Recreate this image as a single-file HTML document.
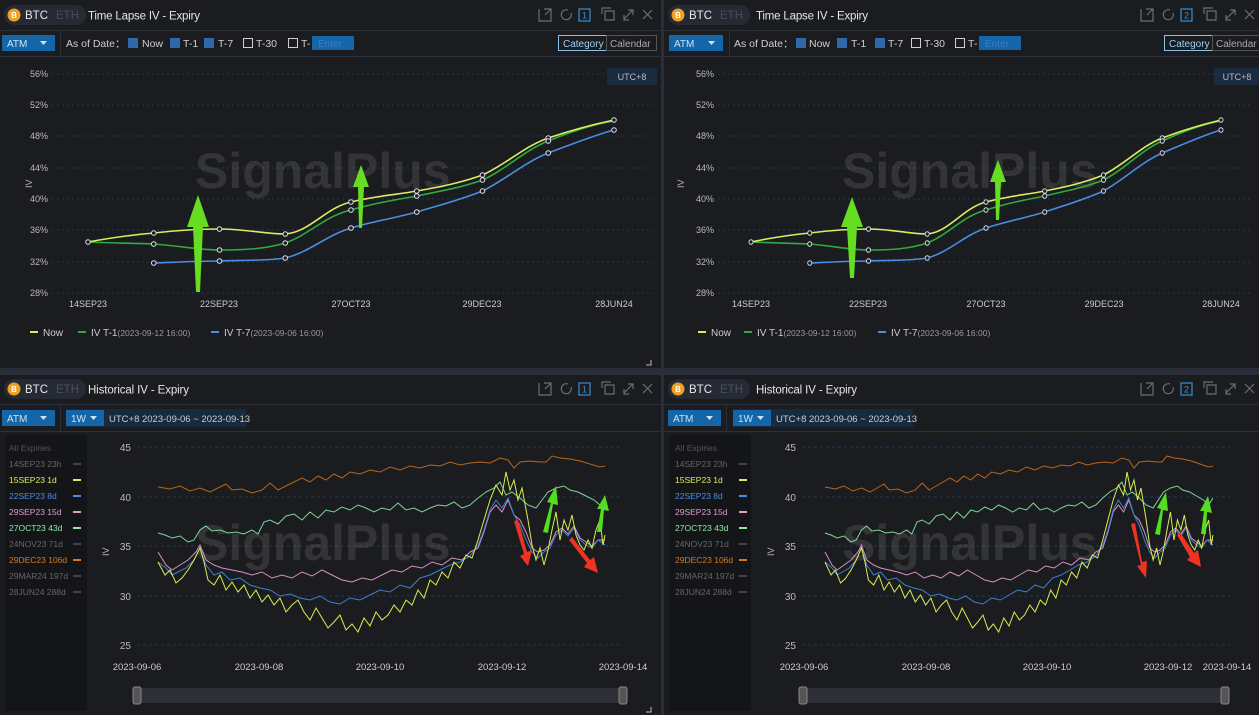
<!DOCTYPE html>
<html><head><meta charset="utf-8">
<style>
*{margin:0;padding:0}
body{width:1259px;height:715px;background:#2a2e38;overflow:hidden}
svg{display:block}
text{font-family:"Liberation Sans",sans-serif}
</style></head><body>
<svg width="1259" height="715" xmlns="http://www.w3.org/2000/svg">
<defs>
<polyline id="sy" fill="none" stroke="#d8ee50" stroke-width="1" vector-effect="non-scaling-stroke" points="158,562 165,575 170,570 176,583 182,578 188,570 194,560 200,548 204,562 208,580 214,585 220,575 226,590 232,582 238,592 244,585 250,598 256,590 262,602 268,595 274,605 280,598 286,612 292,605 298,600 304,612 310,620 316,608 322,618 328,628 334,622 340,615 346,630 352,624 358,632 364,618 370,626 376,612 382,620 388,615 394,605 400,612 406,600 412,605 418,590 424,598 430,580 436,585 442,572 448,578 454,562 460,568 466,555 472,558 478,540 484,520 490,500 496,485 502,495 506,472 510,490 514,480 518,500 522,488 528,520 532,545 536,560 540,548 544,565 548,550 552,530 556,512 560,540 564,520 568,530 572,515 576,535 580,545 584,550 588,540 592,548 596,530 600,520 603,545 605,535"/>
<polyline id="sb" fill="none" stroke="#3f7fd0" stroke-width="1" vector-effect="non-scaling-stroke" points="158,562 166,568 172,575 178,572 186,568 194,560 200,548 206,565 214,575 222,572 230,580 240,578 250,585 260,588 270,590 280,596 290,594 300,598 310,600 320,596 330,602 340,604 350,598 360,600 370,595 380,590 390,592 400,585 410,588 420,578 430,575 440,570 450,565 460,562 470,556 478,545 484,530 490,510 496,500 502,508 508,498 514,515 520,525 526,540 532,552 538,558 544,552 550,548 556,535 562,530 568,536 574,528 580,540 586,545 592,548 598,540 605,545"/>
<polyline id="sp" fill="none" stroke="#d990c4" stroke-width="1" vector-effect="non-scaling-stroke" points="158,552 166,565 172,570 180,565 188,560 196,552 200,545 206,560 214,565 222,568 232,570 242,572 252,575 262,572 272,578 282,575 292,578 302,572 312,576 322,570 332,575 342,580 352,582 362,578 372,580 382,575 392,570 402,572 412,566 422,568 432,562 442,565 452,558 462,560 470,552 478,548 484,532 490,512 496,505 502,512 508,500 514,515 520,520 526,532 532,548 538,552 544,550 550,545 556,532 562,528 568,534 574,526 580,538 586,542 592,546 598,540 605,540"/>
<polyline id="sg" fill="none" stroke="#7fd49a" stroke-width="1" vector-effect="non-scaling-stroke" points="158,533 165,535 172,538 180,536 188,542 194,540 200,530 206,526 212,531 220,530 228,533 236,532 244,534 252,530 258,534 264,522 270,520 278,524 286,516 294,514 302,520 310,512 318,518 326,510 334,512 342,507 350,510 358,505 366,508 374,512 382,508 390,510 398,503 406,510 414,508 422,512 430,508 438,505 446,506 454,502 462,508 470,505 478,498 486,492 494,488 500,482 506,495 512,492 520,498 528,505 536,508 542,500 548,492 556,488 564,486 570,490 578,492 586,496 594,500 600,505 605,498"/>
<polyline id="so" fill="none" stroke="#b8651a" stroke-width="1" vector-effect="non-scaling-stroke" points="158,487 170,489 180,486 190,491 200,488 210,492 220,487 226,484 232,490 242,489 252,493 262,490 270,483 278,490 286,486 294,482 302,478 310,482 318,476 326,480 334,474 342,478 350,472 360,474 370,470 380,472 390,467 400,470 410,466 420,468 430,465 440,466 450,462 460,465 470,463 480,462 490,463 500,458 508,460 514,468 520,462 530,461 540,462 546,462 552,456 560,458 570,459 580,461 590,464 600,467 605,466"/>
<g id="topdata" fill="none" stroke-width="1.6" stroke-linejoin="round">
<path vector-effect="non-scaling-stroke" stroke="#4a8ee0" d="M153.75,263 C180,262 200,261 219.5,261 C245,260 265,261 285.25,258 C310,252 325,236 351,228 C375,221 395,218 416.75,212 C440,205 460,200 482.5,191 C505,180 525,162 548.25,153 C575,143 595,135 614,130"/>
<path vector-effect="non-scaling-stroke" stroke="#2faa40" d="M88,242 C110,243 130,243 153.75,244 C180,246 200,250 219.5,250 C245,250 265,249 285.25,243 C310,234 325,216 351,210 C375,203 395,200 416.75,196 C440,191 460,188 482.5,180 C505,170 525,150 548.25,141 C575,130 595,124 614,121"/>
<path vector-effect="non-scaling-stroke" stroke="#d8ee60" d="M88,242 C110,238 130,235 153.75,233 C180,230 200,229 219.5,229 C245,229 265,234 285.25,234 C310,232 325,208 351,202 C375,196 395,195 416.75,191 C440,187 460,183 482.5,175 C505,165 525,146 548.25,138 C575,129 595,124 614,120"/>
<g fill="#1b1c1f" stroke="#dde" stroke-width="1">
<circle cx="88" cy="242" r="2.3"/><circle cx="153.75" cy="233" r="2.3"/><circle cx="219.5" cy="229" r="2.3"/><circle cx="285.25" cy="234" r="2.3"/><circle cx="351" cy="202" r="2.3"/><circle cx="416.75" cy="191" r="2.3"/><circle cx="482.5" cy="175" r="2.3"/><circle cx="548.25" cy="138" r="2.3"/><circle cx="614" cy="120" r="2.3"/>
<circle cx="153.75" cy="244" r="2.3"/><circle cx="219.5" cy="250" r="2.3"/><circle cx="285.25" cy="243" r="2.3"/><circle cx="351" cy="210" r="2.3"/><circle cx="416.75" cy="196" r="2.3"/><circle cx="482.5" cy="180" r="2.3"/><circle cx="548.25" cy="141" r="2.3"/>
<circle cx="153.75" cy="263" r="2.3"/><circle cx="219.5" cy="261" r="2.3"/><circle cx="285.25" cy="258" r="2.3"/><circle cx="351" cy="228" r="2.3"/><circle cx="416.75" cy="212" r="2.3"/><circle cx="482.5" cy="191" r="2.3"/><circle cx="548.25" cy="153" r="2.3"/><circle cx="614" cy="130" r="2.3"/>
</g></g>
</defs>

<!-- ============ TOP LEFT ============ -->
<svg x="0" y="0" width="661" height="368">
<rect width="661" height="368" fill="#1b1c1f"/>
<rect x="4" y="5" width="82" height="20" rx="10" fill="#262a35"/><circle cx="14" cy="15" r="6.5" fill="#f0a020"/><text x="14" y="18" font-size="8" fill="#fff" text-anchor="middle" font-weight="bold">B</text>
<text x="25" y="19" font-size="11.5" fill="#e8e8e8">BTC</text><text x="56" y="19" font-size="11.5" fill="#4a4e58">ETH</text>
<text x="88" y="19.5" font-size="11.5" fill="#e6e6e6" textLength="112">Time Lapse IV - Expiry</text>
<g stroke="#6a6e78" fill="none" stroke-width="1.2"><path d="M539 9v12h12v-5M544 9h7v7M551 9l-6 6"/><path d="M568 10a5 5 0 1 0 3 3"/><rect x="579" y="9" width="11" height="12" stroke="#3a8fd0"/><path d="M605 11h9v9h-9z M602 14v-6h9"/><path d="M624 19l9-9M628 10h5v5M624 15v5h5"/><path d="M643 10l9 9M652 10l-9 9"/></g>
<text x="584.5" y="18.5" font-size="9" fill="#3a8fd0" text-anchor="middle">1</text>
<line x1="0" y1="30.5" x2="661" y2="30.5" stroke="#2c3038"/>
<rect x="2" y="35" width="53" height="16" fill="#1466a8"/><text x="7" y="47" font-size="10" fill="#cfe3f5">ATM</text><path d="M40 41h7l-3.5 4z" fill="#cfe3f5"/>
<line x1="60.5" y1="31" x2="60.5" y2="56" stroke="#2c3038"/>
<text x="66" y="47" font-size="10.5" fill="#cfcfcf">As of Date：</text>
<rect x="128" y="38" width="10" height="10" fill="#2e6aa8"/><text x="142" y="47" font-size="10.5" fill="#cfcfcf">Now</text>
<rect x="170" y="38" width="10" height="10" fill="#2e6aa8"/><text x="183" y="47" font-size="10.5" fill="#cfcfcf">T-1</text>
<rect x="204" y="38" width="10" height="10" fill="#2e6aa8"/><text x="218" y="47" font-size="10.5" fill="#cfcfcf">T-7</text>
<rect x="243.5" y="38.5" width="9" height="9" fill="none" stroke="#cfcfcf"/><text x="256" y="47" font-size="10.5" fill="#cfcfcf">T-30</text>
<rect x="288.5" y="38.5" width="9" height="9" fill="none" stroke="#cfcfcf"/><text x="301" y="47" font-size="10.5" fill="#cfcfcf">T-</text>
<rect x="312" y="36" width="42" height="14" fill="#1466a8"/><text x="318" y="47" font-size="10" fill="#3a7fc0">Enter</text>
<rect x="558.5" y="35.5" width="48" height="15" fill="none" stroke="#8fc0e8"/><text x="563" y="47" font-size="10" fill="#9cd0f5">Category</text><rect x="606.5" y="35.5" width="50" height="15" fill="none" stroke="#555"/><text x="610" y="47" font-size="10" fill="#aaa">Calendar</text>
<line x1="0" y1="56.5" x2="661" y2="56.5" stroke="#2c3038"/>
<g font-size="9" fill="#bbb" text-anchor="end"><text x="48" y="77">56%</text><text x="48" y="108">52%</text><text x="48" y="139">48%</text><text x="48" y="171">44%</text><text x="48" y="202">40%</text><text x="48" y="233">36%</text><text x="48" y="265">32%</text><text x="48" y="296">28%</text></g>
<g stroke="#1d3a58" stroke-dasharray="2 3"><line x1="52" y1="74" x2="653" y2="74"/><line x1="52" y1="105" x2="653" y2="105"/><line x1="52" y1="136" x2="653" y2="136"/><line x1="52" y1="168" x2="653" y2="168"/><line x1="52" y1="199" x2="653" y2="199"/><line x1="52" y1="230" x2="653" y2="230"/><line x1="52" y1="262" x2="653" y2="262"/><line x1="52" y1="293" x2="653" y2="293"/></g>
<rect x="607" y="68" width="50" height="17" fill="#1a2a40"/><text x="632" y="80" font-size="9" fill="#bbb" text-anchor="middle">UTC+8</text>
<text x="32" y="188" font-size="9" fill="#bbb" transform="rotate(-90 32 188)">IV</text>
<g font-size="9" fill="#ccc" text-anchor="middle"><text x="88" y="307">14SEP23</text><text x="219" y="307">22SEP23</text><text x="351" y="307">27OCT23</text><text x="482" y="307">29DEC23</text><text x="614" y="307">28JUN24</text></g>
<text x="195" y="188" font-size="50" font-weight="bold" fill="#fff" fill-opacity="0.11">SignalPlus</text>
<use href="#topdata"/>
<polygon fill="#66dd22" points="196,292 200,292 203,227 209,227 198,195 187,227 193,227"/>
<polygon fill="#66dd22" points="359,228 362,228 364,187 369,187 361,165 353,187 358,187"/>
<line x1="30" y1="332" x2="38" y2="332" stroke="#d8ee60" stroke-width="2"/><text x="43" y="336" font-size="10" fill="#ccc">Now</text>
<line x1="78" y1="332" x2="86" y2="332" stroke="#2faa40" stroke-width="2"/><text x="91" y="336" font-size="10" fill="#ccc">IV T-1<tspan font-size="8.5" fill="#999">(2023-09-12 16:00)</tspan></text>
<line x1="211" y1="332" x2="219" y2="332" stroke="#4a8ee0" stroke-width="2"/><text x="224" y="336" font-size="10" fill="#ccc">IV T-7<tspan font-size="8.5" fill="#999">(2023-09-06 16:00)</tspan></text>
<path d="M651 360v5h-5" stroke="#bbb" fill="none"/>
</svg>

<!-- ============ TOP RIGHT ============ -->
<svg x="664" y="0" width="595" height="368">
<rect width="595" height="368" fill="#1b1c1f"/>
<rect x="4" y="5" width="82" height="20" rx="10" fill="#262a35"/><circle cx="14" cy="15" r="6.5" fill="#f0a020"/><text x="14" y="18" font-size="8" fill="#fff" text-anchor="middle" font-weight="bold">B</text>
<text x="25" y="19" font-size="11.5" fill="#e8e8e8">BTC</text><text x="56" y="19" font-size="11.5" fill="#4a4e58">ETH</text>
<text x="92" y="19.5" font-size="11.5" fill="#e6e6e6" textLength="112">Time Lapse IV - Expiry</text>
<g stroke="#6a6e78" fill="none" stroke-width="1.2"><path d="M477 9v12h12v-5M482 9h7v7M489 9l-6 6"/><path d="M506 10a5 5 0 1 0 3 3"/><rect x="517" y="9" width="11" height="12" stroke="#3a8fd0"/><path d="M543 11h9v9h-9z M540 14v-6h9"/><path d="M562 19l9-9M566 10h5v5M562 15v5h5"/><path d="M581 10l9 9M590 10l-9 9"/></g>
<text x="522.5" y="18.5" font-size="9" fill="#3a8fd0" text-anchor="middle">2</text>
<line x1="0" y1="30.5" x2="595" y2="30.5" stroke="#2c3038"/>
<rect x="5" y="35" width="54" height="16" fill="#1466a8"/><text x="10" y="47" font-size="10" fill="#cfe3f5">ATM</text><path d="M44 41h7l-3.5 4z" fill="#cfe3f5"/>
<line x1="65.5" y1="31" x2="65.5" y2="56" stroke="#2c3038"/>
<text x="70" y="47" font-size="10.5" fill="#cfcfcf">As of Date：</text>
<rect x="132" y="38" width="10" height="10" fill="#2e6aa8"/><text x="145" y="47" font-size="10.5" fill="#cfcfcf">Now</text>
<rect x="173" y="38" width="10" height="10" fill="#2e6aa8"/><text x="187" y="47" font-size="10.5" fill="#cfcfcf">T-1</text>
<rect x="211" y="38" width="10" height="10" fill="#2e6aa8"/><text x="224" y="47" font-size="10.5" fill="#cfcfcf">T-7</text>
<rect x="247.5" y="38.5" width="9" height="9" fill="none" stroke="#cfcfcf"/><text x="260" y="47" font-size="10.5" fill="#cfcfcf">T-30</text>
<rect x="291.5" y="38.5" width="9" height="9" fill="none" stroke="#cfcfcf"/><text x="304" y="47" font-size="10.5" fill="#cfcfcf">T-</text>
<rect x="315" y="36" width="42" height="14" fill="#1466a8"/><text x="321" y="47" font-size="10" fill="#3a7fc0">Enter</text>
<rect x="500.5" y="35.5" width="48" height="15" fill="none" stroke="#8fc0e8"/><text x="505" y="47" font-size="10" fill="#9cd0f5">Category</text><rect x="548.5" y="35.5" width="50" height="15" fill="none" stroke="#555"/><text x="552" y="47" font-size="10" fill="#aaa">Calendar</text>
<line x1="0" y1="56.5" x2="595" y2="56.5" stroke="#2c3038"/>
<g font-size="9" fill="#bbb" text-anchor="end"><text x="50" y="77">56%</text><text x="50" y="108">52%</text><text x="50" y="139">48%</text><text x="50" y="171">44%</text><text x="50" y="202">40%</text><text x="50" y="233">36%</text><text x="50" y="265">32%</text><text x="50" y="296">28%</text></g>
<g stroke="#1d3a58" stroke-dasharray="2 3"><line x1="54" y1="74" x2="589" y2="74"/><line x1="54" y1="105" x2="589" y2="105"/><line x1="54" y1="136" x2="589" y2="136"/><line x1="54" y1="168" x2="589" y2="168"/><line x1="54" y1="199" x2="589" y2="199"/><line x1="54" y1="230" x2="589" y2="230"/><line x1="54" y1="262" x2="589" y2="262"/><line x1="54" y1="293" x2="589" y2="293"/></g>
<rect x="550" y="68" width="45" height="17" fill="#1a2a40"/><text x="573" y="80" font-size="9" fill="#bbb" text-anchor="middle">UTC+8</text>
<text x="20" y="188" font-size="9" fill="#bbb" transform="rotate(-90 20 188)">IV</text>
<g font-size="9" fill="#ccc" text-anchor="middle"><text x="87" y="307">14SEP23</text><text x="204" y="307">22SEP23</text><text x="322" y="307">27OCT23</text><text x="440" y="307">29DEC23</text><text x="557" y="307">28JUN24</text></g>
<text x="178" y="188" font-size="50" font-weight="bold" fill="#fff" fill-opacity="0.11">SignalPlus</text>
<use href="#topdata" transform="translate(87,0) scale(0.8935,1) translate(-88,0)"/>
<polygon fill="#66dd22" points="186,278 190,278 193,227 199,227 188,197 177,227 183,227"/>
<polygon fill="#66dd22" points="332,220 335,220 337,182 342,182 334,160 326,182 331,182"/>
<line x1="34" y1="332" x2="42" y2="332" stroke="#d8ee60" stroke-width="2"/><text x="47" y="336" font-size="10" fill="#ccc">Now</text>
<line x1="80" y1="332" x2="88" y2="332" stroke="#2faa40" stroke-width="2"/><text x="93" y="336" font-size="10" fill="#ccc">IV T-1<tspan font-size="8.5" fill="#999">(2023-09-12 16:00)</tspan></text>
<line x1="214" y1="332" x2="222" y2="332" stroke="#4a8ee0" stroke-width="2"/><text x="227" y="336" font-size="10" fill="#ccc">IV T-7<tspan font-size="8.5" fill="#999">(2023-09-06 16:00)</tspan></text>
</svg>

<!-- ============ BOTTOM LEFT ============ -->
<svg x="0" y="375" width="661" height="340" viewBox="0 375 661 340">
<rect x="0" y="375" width="661" height="340" fill="#1b1c1f"/>
<rect x="4" y="379" width="82" height="20" rx="10" fill="#262a35"/><circle cx="14" cy="389" r="6.5" fill="#f0a020"/><text x="14" y="392" font-size="8" fill="#fff" text-anchor="middle" font-weight="bold">B</text>
<text x="25" y="393" font-size="11.5" fill="#e8e8e8">BTC</text><text x="56" y="393" font-size="11.5" fill="#4a4e58">ETH</text>
<text x="88" y="393.5" font-size="11.5" fill="#e6e6e6" textLength="101">Historical IV - Expiry</text>
<g stroke="#6a6e78" fill="none" stroke-width="1.2"><path d="M539 383v12h12v-5M544 383h7v7M551 383l-6 6"/><path d="M568 384a5 5 0 1 0 3 3"/><rect x="579" y="383" width="11" height="12" stroke="#3a8fd0"/><path d="M605 385h9v9h-9z M602 388v-6h9"/><path d="M624 393l9-9M628 384h5v5M624 389v5h5"/><path d="M643 384l9 9M652 384l-9 9"/></g>
<text x="584.5" y="392.5" font-size="9" fill="#3a8fd0" text-anchor="middle">1</text>
<line x1="0" y1="404.5" x2="661" y2="404.5" stroke="#2c3038"/>
<rect x="2" y="410" width="53" height="16" fill="#1466a8"/><text x="7" y="422" font-size="10" fill="#cfe3f5">ATM</text><path d="M40 416h7l-3.5 4z" fill="#cfe3f5"/>
<line x1="60.5" y1="405" x2="60.5" y2="432" stroke="#2c3038"/>
<rect x="66" y="409" width="180" height="18" fill="#182a40"/>
<rect x="66" y="410" width="38" height="16" fill="#1466a8"/><text x="71" y="422" font-size="10" fill="#cfe3f5">1W</text><path d="M90 416h7l-3.5 4z" fill="#cfe3f5"/>
<text x="109" y="422" font-size="9.5" fill="#ccc">UTC+8 2023-09-06 ~ 2023-09-13</text>
<line x1="0" y1="431.5" x2="661" y2="431.5" stroke="#2c3038"/>
<rect x="5" y="435" width="82" height="276" fill="#141518"/>
<g font-size="8.5"><text x="9" y="451" fill="#555">All Expiries</text><text x="9" y="467" fill="#666">14SEP23 23h</text><text x="9" y="483" fill="#d8ee60">15SEP23 1d</text><text x="9" y="499" fill="#4a8ee0">22SEP23 8d</text><text x="9" y="515" fill="#e59ad0">29SEP23 15d</text><text x="9" y="531" fill="#8fe8a8">27OCT23 43d</text><text x="9" y="547" fill="#666">24NOV23 71d</text><text x="9" y="563" fill="#d57a20">29DEC23 106d</text><text x="9" y="579" fill="#666">29MAR24 197d</text><text x="9" y="595" fill="#666">28JUN24 288d</text></g>
<g stroke-width="2"><line x1="73" y1="464" x2="81" y2="464" stroke="#444"/><line x1="73" y1="480" x2="81" y2="480" stroke="#d8ee60"/><line x1="73" y1="496" x2="81" y2="496" stroke="#4a8ee0"/><line x1="73" y1="512" x2="81" y2="512" stroke="#e59ad0"/><line x1="73" y1="528" x2="81" y2="528" stroke="#8fe8a8"/><line x1="73" y1="544" x2="81" y2="544" stroke="#444"/><line x1="73" y1="560" x2="81" y2="560" stroke="#d57a20"/><line x1="73" y1="576" x2="81" y2="576" stroke="#444"/><line x1="73" y1="592" x2="81" y2="592" stroke="#444"/></g>
<g font-size="10" fill="#bbb" text-anchor="end"><text x="131" y="451">45</text><text x="131" y="501">40</text><text x="131" y="550">35</text><text x="131" y="600">30</text><text x="131" y="649">25</text></g>
<g stroke="#1d3a58" stroke-dasharray="3 3"><line x1="137" y1="447" x2="622" y2="447"/><line x1="137" y1="497" x2="622" y2="497"/><line x1="137" y1="546" x2="622" y2="546"/><line x1="137" y1="596" x2="622" y2="596"/><line x1="137" y1="645" x2="622" y2="645"/></g>
<text x="109" y="556" font-size="9" fill="#bbb" transform="rotate(-90 109 556)">IV</text>
<g font-size="9.5" fill="#ccc" text-anchor="middle"><text x="137" y="670">2023-09-06</text><text x="259" y="670">2023-09-08</text><text x="380" y="670">2023-09-10</text><text x="502" y="670">2023-09-12</text><text x="623" y="670">2023-09-14</text></g>
<text x="195" y="560" font-size="50" font-weight="bold" fill="#fff" fill-opacity="0.11">SignalPlus</text>
<use href="#so"/><use href="#sg"/><use href="#sp"/><use href="#sb"/><use href="#sy"/>
<polygon fill="#ee3322" points="514,521 518,520 527,552 532,550 528,566 520,556 524,554"/>
<polygon fill="#ee3322" points="569,540 572,537 590,560 594,557 598,573 584,567 587,563"/>
<polygon fill="#55dd22" points="543,532 548,533 553,504 558,505 556,486 547,502 551,503"/>
<polygon fill="#55dd22" points="597,532 602,532 604,510 609,511 605,495 597,509 601,509"/>
<rect x="135" y="688" width="492" height="15" rx="3" fill="#2e3036"/><rect x="133" y="687" width="8" height="17" rx="2" fill="#555" stroke="#888"/><rect x="619" y="687" width="8" height="17" rx="2" fill="#555" stroke="#888"/>
<path d="M651 707v5h-5" stroke="#bbb" fill="none"/>
</svg>

<!-- ============ BOTTOM RIGHT ============ -->
<svg x="664" y="375" width="595" height="340" viewBox="0 375 595 340">
<rect x="0" y="375" width="595" height="340" fill="#1b1c1f"/>
<rect x="4" y="379" width="82" height="20" rx="10" fill="#262a35"/><circle cx="14" cy="389" r="6.5" fill="#f0a020"/><text x="14" y="392" font-size="8" fill="#fff" text-anchor="middle" font-weight="bold">B</text>
<text x="25" y="393" font-size="11.5" fill="#e8e8e8">BTC</text><text x="56" y="393" font-size="11.5" fill="#4a4e58">ETH</text>
<text x="92" y="393.5" font-size="11.5" fill="#e6e6e6" textLength="101">Historical IV - Expiry</text>
<g stroke="#6a6e78" fill="none" stroke-width="1.2"><path d="M477 383v12h12v-5M482 383h7v7M489 383l-6 6"/><path d="M506 384a5 5 0 1 0 3 3"/><rect x="517" y="383" width="11" height="12" stroke="#3a8fd0"/><path d="M543 385h9v9h-9z M540 388v-6h9"/><path d="M562 393l9-9M566 384h5v5M562 389v5h5"/><path d="M581 384l9 9M590 384l-9 9"/></g>
<text x="522.5" y="392.5" font-size="9" fill="#3a8fd0" text-anchor="middle">2</text>
<line x1="0" y1="404.5" x2="595" y2="404.5" stroke="#2c3038"/>
<rect x="4" y="410" width="53" height="16" fill="#1466a8"/><text x="9" y="422" font-size="10" fill="#cfe3f5">ATM</text><path d="M42 416h7l-3.5 4z" fill="#cfe3f5"/>
<line x1="62.5" y1="405" x2="62.5" y2="432" stroke="#2c3038"/>
<rect x="69" y="409" width="180" height="18" fill="#182a40"/>
<rect x="69" y="410" width="38" height="16" fill="#1466a8"/><text x="74" y="422" font-size="10" fill="#cfe3f5">1W</text><path d="M93 416h7l-3.5 4z" fill="#cfe3f5"/>
<text x="112" y="422" font-size="9.5" fill="#ccc">UTC+8 2023-09-06 ~ 2023-09-13</text>
<line x1="0" y1="431.5" x2="595" y2="431.5" stroke="#2c3038"/>
<rect x="5" y="435" width="82" height="276" fill="#141518"/>
<g font-size="8.5"><text x="11" y="451" fill="#555">All Expiries</text><text x="11" y="467" fill="#666">14SEP23 23h</text><text x="11" y="483" fill="#d8ee60">15SEP23 1d</text><text x="11" y="499" fill="#4a8ee0">22SEP23 8d</text><text x="11" y="515" fill="#e59ad0">29SEP23 15d</text><text x="11" y="531" fill="#8fe8a8">27OCT23 43d</text><text x="11" y="547" fill="#666">24NOV23 71d</text><text x="11" y="563" fill="#d57a20">29DEC23 106d</text><text x="11" y="579" fill="#666">29MAR24 197d</text><text x="11" y="595" fill="#666">28JUN24 288d</text></g>
<g stroke-width="2"><line x1="75" y1="464" x2="83" y2="464" stroke="#444"/><line x1="75" y1="480" x2="83" y2="480" stroke="#d8ee60"/><line x1="75" y1="496" x2="83" y2="496" stroke="#4a8ee0"/><line x1="75" y1="512" x2="83" y2="512" stroke="#e59ad0"/><line x1="75" y1="528" x2="83" y2="528" stroke="#8fe8a8"/><line x1="75" y1="544" x2="83" y2="544" stroke="#444"/><line x1="75" y1="560" x2="83" y2="560" stroke="#d57a20"/><line x1="75" y1="576" x2="83" y2="576" stroke="#444"/><line x1="75" y1="592" x2="83" y2="592" stroke="#444"/></g>
<g font-size="10" fill="#bbb" text-anchor="end"><text x="132" y="451">45</text><text x="132" y="501">40</text><text x="132" y="550">35</text><text x="132" y="600">30</text><text x="132" y="649">25</text></g>
<g stroke="#1d3a58" stroke-dasharray="3 3"><line x1="138" y1="447" x2="566" y2="447"/><line x1="138" y1="497" x2="566" y2="497"/><line x1="138" y1="546" x2="566" y2="546"/><line x1="138" y1="596" x2="566" y2="596"/><line x1="138" y1="645" x2="566" y2="645"/></g>
<text x="110" y="556" font-size="9" fill="#bbb" transform="rotate(-90 110 556)">IV</text>
<g font-size="9.5" fill="#ccc" text-anchor="middle"><text x="140" y="670">2023-09-06</text><text x="262" y="670">2023-09-08</text><text x="383" y="670">2023-09-10</text><text x="504" y="670">2023-09-12</text><text x="563" y="670">2023-09-14</text></g>
<text x="178" y="560" font-size="50" font-weight="bold" fill="#fff" fill-opacity="0.11">SignalPlus</text>
<g transform="translate(161,0) scale(0.868,1) translate(-158,0)"><use href="#so"/><use href="#sg"/><use href="#sp"/><use href="#sb"/><use href="#sy"/></g>
<polygon fill="#ee3322" points="467,524 471,523 478,562 483,561 482,578 473,566 477,565"/>
<polygon fill="#ee3322" points="513,535 516,532 530,553 534,550 537,567 523,560 526,557"/>
<polygon fill="#55dd22" points="491,534 496,535 499,510 504,511 502,492 493,508 497,509"/>
<polygon fill="#55dd22" points="537,534 542,534 543,512 548,513 544,496 536,511 540,511"/>
<rect x="137" y="688" width="426" height="15" rx="3" fill="#2e3036"/><rect x="135" y="687" width="8" height="17" rx="2" fill="#555" stroke="#888"/><rect x="557" y="687" width="8" height="17" rx="2" fill="#555" stroke="#888"/>
</svg>
</svg>
</body></html>
